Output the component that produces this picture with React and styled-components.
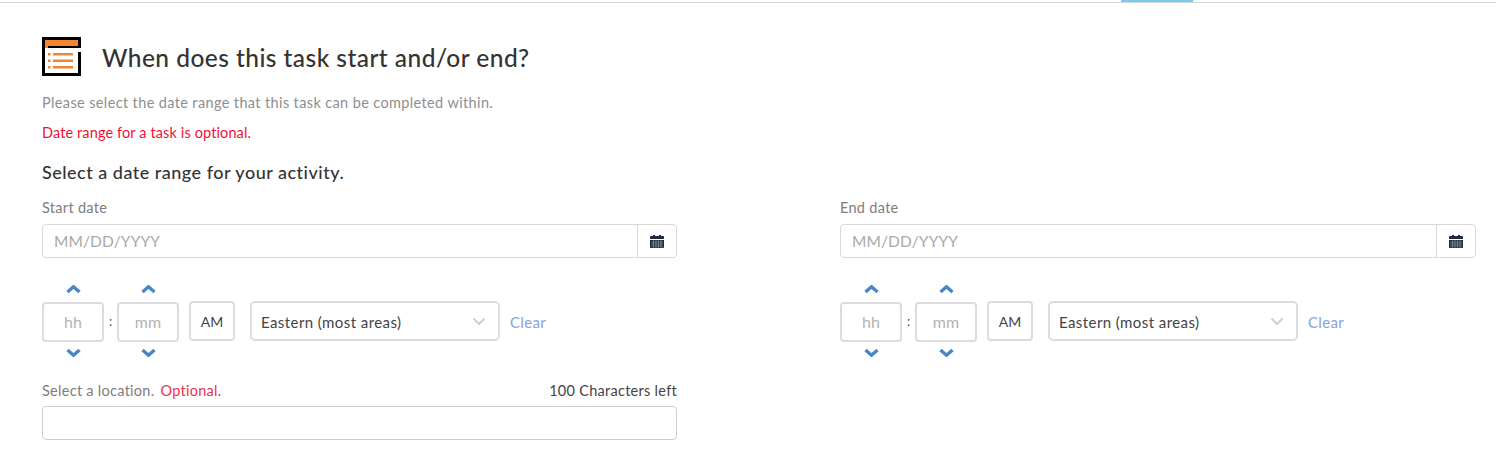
import React from 'react';
import styled, { createGlobalStyle } from 'styled-components';

const GlobalStyle = createGlobalStyle`
  html, body {
    margin: 0;
    padding: 0;
    background: #fff;
    font-family: "Lato", "Open Sans", sans-serif;
  }
`;

const Page = styled.div`
  width: 1496px;
  height: 465px;
  overflow: hidden;
  box-sizing: border-box;
`;
const TabBar = styled.div`
  height: 3px;
  box-sizing: border-box;
  border-bottom: 1px solid #d6d6d6;
  padding-left: 1121px;
`;
const ActiveTab = styled.div`
  width: 72px;
  height: 2px;
  background: #7accee;
`;
const Content = styled.div`
  padding: 33px 20px 0 42px;
`;
const TitleRow = styled.div`
  display: flex;
  align-items: center;
  gap: 21px;
  height: 40px;
`;
const Title = styled.h1`
  margin: 0;
  padding-top: 4px;
  font-size: 24.5px;
  font-weight: 500;
  color: #333;
  line-height: 40px;
  letter-spacing: 0.45px;
`;
const Hint = styled.p`
  margin: 18px 0 0;
  font-size: 14.5px;
  line-height: 18px;
  color: #8e8e8e;
  letter-spacing: 0.37px;
`;
const Warning = styled.p`
  margin: 12px 0 0;
  font-size: 14.5px;
  line-height: 18px;
  color: #ee1133;
  letter-spacing: 0.12px;
`;
const Section = styled.h2`
  margin: 19px 0 0;
  font-size: 18px;
  line-height: 22px;
  font-weight: 500;
  color: #333;
  letter-spacing: 0.5px;
`;
const Columns = styled.div`
  display: grid;
  grid-template-columns: 635px 636px;
  column-gap: 163px;
  margin-top: 16px;
`;
const Label = styled.label`
  display: block;
  font-size: 14.5px;
  line-height: 18px;
  color: #7d7d7d;
  letter-spacing: 0.3px;
`;
const DateGroup = styled.div`
  display: flex;
  height: 34px;
  margin-top: 7px;
  box-sizing: border-box;
  border: 1px solid #d8d8d8;
  border-radius: 4px;
`;
const DateInput = styled.input`
  flex: 1;
  min-width: 0;
  border: 0;
  outline: 0;
  padding: 0 11px;
  background: transparent;
  font: 15.5px "Lato", sans-serif;
  letter-spacing: 0.1px;
  color: #333;
  &::placeholder {
    color: #a9a9a9;
    opacity: 1;
  }
`;
const CalendarButton = styled.div`
  width: 38px;
  display: flex;
  align-items: center;
  justify-content: center;
  border-left: 1px solid #d8d8d8;
`;
const TimeRow = styled.div`
  display: flex;
  align-items: center;
  margin-top: 31px;
  height: 64px;
`;
const Spinner = styled.div`
  display: flex;
  flex-direction: column;
  align-items: center;
  width: 62px;
`;
const Arrow = styled.svg`
  display: block;
  width: 15px;
  height: 9px;
  margin: ${p => (p.$down ? '6px 0 0' : '0 0 8px')};
`;
const TimeBox = styled.input`
  width: 62px;
  height: 40px;
  box-sizing: border-box;
  border: 2px solid #dcdcdc;
  border-radius: 4px;
  outline: 0;
  text-align: center;
  padding: 0 0 2px;
  font: 16px "Lato", sans-serif;
  background: #fff;
  &::placeholder {
    color: #b3b3b3;
    opacity: 1;
  }
`;
const Colon = styled.span`
  width: 13px;
  text-align: center;
  font-size: 13px;
  color: #555;
`;
const Meridiem = styled.div`
  width: 46px;
  height: 40px;
  margin-left: 10px;
  padding-top: 1px;
  box-sizing: border-box;
  display: flex;
  align-items: center;
  justify-content: center;
  border: 2px solid #dcdcdc;
  border-radius: 4px;
  font-size: 14px;
  color: #444;
`;
const Zone = styled.div`
  width: 250px;
  height: 40px;
  margin-left: 15px;
  box-sizing: border-box;
  display: flex;
  align-items: center;
  justify-content: space-between;
  padding: 1px 12px 0 9px;
  border: 2px solid #dcdcdc;
  border-radius: 5px;
  font-size: 15px;
  letter-spacing: 0.42px;
  color: #444;
`;
const ClearLink = styled.a`
  margin-left: 10px;
  padding-top: 1px;
  font-size: 15px;
  letter-spacing: 0.3px;
  color: #86a2dc;
`;
const LocationHead = styled.div`
  display: flex;
  justify-content: space-between;
  margin-top: 29px;
  line-height: 18px;
  font-size: 14.5px;
  letter-spacing: 0.28px;
  color: #7d7d7d;
`;
const LocationField = styled.div`
  width: 635px;
`;
const Optional = styled.span`
  margin-left: 2px;
  color: #e8314f;
`;
const Counter = styled.span`
  color: #444;
`;
const LocationInput = styled.input`
  display: block;
  width: 100%;
  height: 34px;
  margin-top: 6px;
  box-sizing: border-box;
  border: 1px solid #cfcfcf;
  border-radius: 4px;
  outline: 0;
`;

const TaskIcon = () => (
  <svg width="39" height="39" viewBox="0 0 39 39">
    <path d="M0 0h39v11H6V9h30V3H3v33h33V15h3v24H0z" fill="#000" />
    <rect x="3" y="3" width="33" height="6" fill="#f08532" />
    <rect x="3" y="9" width="3" height="2" fill="#f08532" />
    <g fill="#f08532">
      <rect x="6" y="16" width="2.5" height="2.5" />
      <rect x="11" y="16" width="20" height="2.5" />
      <rect x="6" y="22.5" width="2.5" height="2.5" />
      <rect x="11" y="22.5" width="20" height="2.5" />
      <rect x="6" y="29" width="2.5" height="2.5" />
      <rect x="11" y="29" width="20" height="2.5" />
    </g>
  </svg>
);

const CalendarIcon = () => (
  <svg width="14" height="14" viewBox="0 0 14 14">
    <path d="M1 2h2V1h2v1h4V1h2v1h2a1 1 0 0 1 1 1v2H0V3a1 1 0 0 1 1-1z" fill="#1f2b3a" />
    <path d="M0 6h14v7a1 1 0 0 1-1 1H1a1 1 0 0 1-1-1z" fill="#1f2b3a" />
    <path d="M1 8h12M1 10h12M1 12h12M3.5 6v8M6 6v8M8.5 6v8M11 6v8" stroke="#a9b3bf" strokeWidth="0.5" />
  </svg>
);

const Chevron = ({ down }) => (
  <Arrow $down={down} viewBox="0 0 15 9">
    <path
      d={down ? 'M1.5 2 7.5 7.2l6-5.2' : 'M1.5 7 7.5 1.8l6 5.2'}
      fill="none"
      stroke="#4a86c5"
      strokeWidth="3.4"
    />
  </Arrow>
);

const TimeField = ({ placeholder }) => (
  <Spinner>
    <Chevron />
    <TimeBox placeholder={placeholder} readOnly />
    <Chevron down />
  </Spinner>
);

const DateColumn = ({ label }) => (
  <div>
    <Label>{label}</Label>
    <DateGroup>
      <DateInput placeholder="MM/DD/YYYY" readOnly />
      <CalendarButton>
        <CalendarIcon />
      </CalendarButton>
    </DateGroup>
    <TimeRow>
      <TimeField placeholder="hh" />
      <Colon>:</Colon>
      <TimeField placeholder="mm" />
      <Meridiem>AM</Meridiem>
      <Zone>
        Eastern (most areas)
        <svg width="14" height="9" viewBox="0 0 14 9">
          <path d="M1.5 1.5 7 7l5.5-5.5" fill="none" stroke="#cfcfcf" strokeWidth="2" />
        </svg>
      </Zone>
      <ClearLink>Clear</ClearLink>
    </TimeRow>
  </div>
);

export default function App() {
  return (
    <Page>
      <GlobalStyle />
      <TabBar>
        <ActiveTab />
      </TabBar>
      <Content>
        <TitleRow>
          <TaskIcon />
          <Title>When does this task start and/or end?</Title>
        </TitleRow>
        <Hint>Please select the date range that this task can be completed within.</Hint>
        <Warning>Date range for a task is optional.</Warning>
        <Section>Select a date range for your activity.</Section>
        <Columns>
          <DateColumn label="Start date" />
          <DateColumn label="End date" />
        </Columns>
        <LocationField>
          <LocationHead>
            <span>
              Select a location. <Optional>Optional.</Optional>
            </span>
            <Counter>100 Characters left</Counter>
          </LocationHead>
          <LocationInput readOnly />
        </LocationField>
      </Content>
    </Page>
  );
}
